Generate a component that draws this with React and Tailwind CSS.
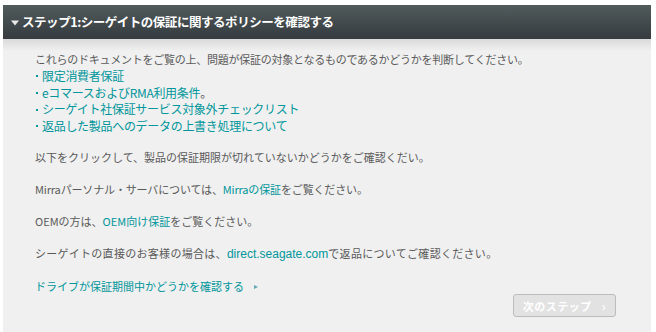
import React from 'react';

const links = [
  '限定消費者保証',
  'eコマースおよびRMA利用条件',
  'シーゲイト社保証サービス対象外チェックリスト',
  '返品した製品へのデータの上書き処理について',
];

function A({ children, className = '' }) {
  return <a className={`text-[#00969b] cursor-pointer ${className}`}>{children}</a>;
}

export default function App() {
  return (
    <div className="w-[656px] h-[332px] bg-white pt-[5px] pl-[3px] overflow-hidden font-['Noto_Sans_CJK_JP',sans-serif]">
      <div className="w-[648px] h-[327px] bg-[#f0f0f0] flex flex-col">
        <div className="h-[34px] flex items-center pl-[7px] bg-gradient-to-b from-[#515b5c] to-[#353b3f]">
          <svg width="10" height="8" viewBox="0 0 10 8" className="mr-[2px] mt-[1px]">
            <path d="M1 1.5h8L5 6.5z" fill="#e8e8e8" />
          </svg>
          <h2 className="text-white text-[12.5px] font-bold tracking-[-0.45px] leading-none">
            ステップ1:シーゲイトの保証に関するポリシーを確認する
          </h2>
        </div>
        <div className="h-[12px] bg-gradient-to-b from-[#dadada] to-[#f0f0f0]" />
        <div className="flex-1 pl-[32px] pr-4 text-[11px] leading-[16px] text-[#5a5a5a]">
          <p className="tracking-[-0.25px] leading-[16.5px]">これらのドキュメントをご覧の上、問題が保証の対象となるものであるかどうかを判断してください。</p>
          <ul className="mb-[15px] tracking-[-0.3px]">
            {links.map((l, i) => (
              <li key={l} className="flex items-center h-[16.7px]">
                <span className="w-[2px] h-[2px] bg-[#00969b] ml-[1px] mr-[4px] mt-[1px]" />
                <A className="text-[12px]">{l}</A>
                {i === 1 && <span className="text-[12px]">。</span>}
              </li>
            ))}
          </ul>
          <p className="mb-[16px]">以下をクリックして、製品の保証期限が切れていないかどうかをご確認くだい。</p>
          <p className="mb-[16px] tracking-[-0.15px]">
            Mirraパーソナル・サーバについては、<A>Mirraの保証</A>をご覧ください。
          </p>
          <p className="mb-[16px]">
            OEMの方は、<A>OEM向け保証</A>をご覧ください。
          </p>
          <p className="mb-[16px] tracking-[0.3px]">
            シーゲイトの直接のお客様の場合は、<A className="font-['Liberation_Sans',sans-serif] text-[12px] tracking-normal">direct.seagate.com</A>で返品についてご確認ください。
          </p>
          <p className="flex items-center h-[16px]">
            <A>ドライブが保証期間中かどうかを確認する</A>
            <svg width="6" height="6" viewBox="0 0 6 6" className="ml-[9px] mt-[1px]">
              <path d="M1 1l4 2-4 2z" fill="#5fa9b0" />
            </svg>
          </p>
          <div className="flex justify-end pr-[19px] mt-0">
            <button className="w-[103px] h-[23px] rounded-[3px] border border-[#bcbcbc] bg-[#e2e2e2] text-white text-[11px] font-bold tracking-[0.5px] flex items-center justify-center gap-[10px]">
              <span>次のステップ</span>
              <span className="text-[12px]">›</span>
            </button>
          </div>
        </div>
      </div>
    </div>
  );
}
